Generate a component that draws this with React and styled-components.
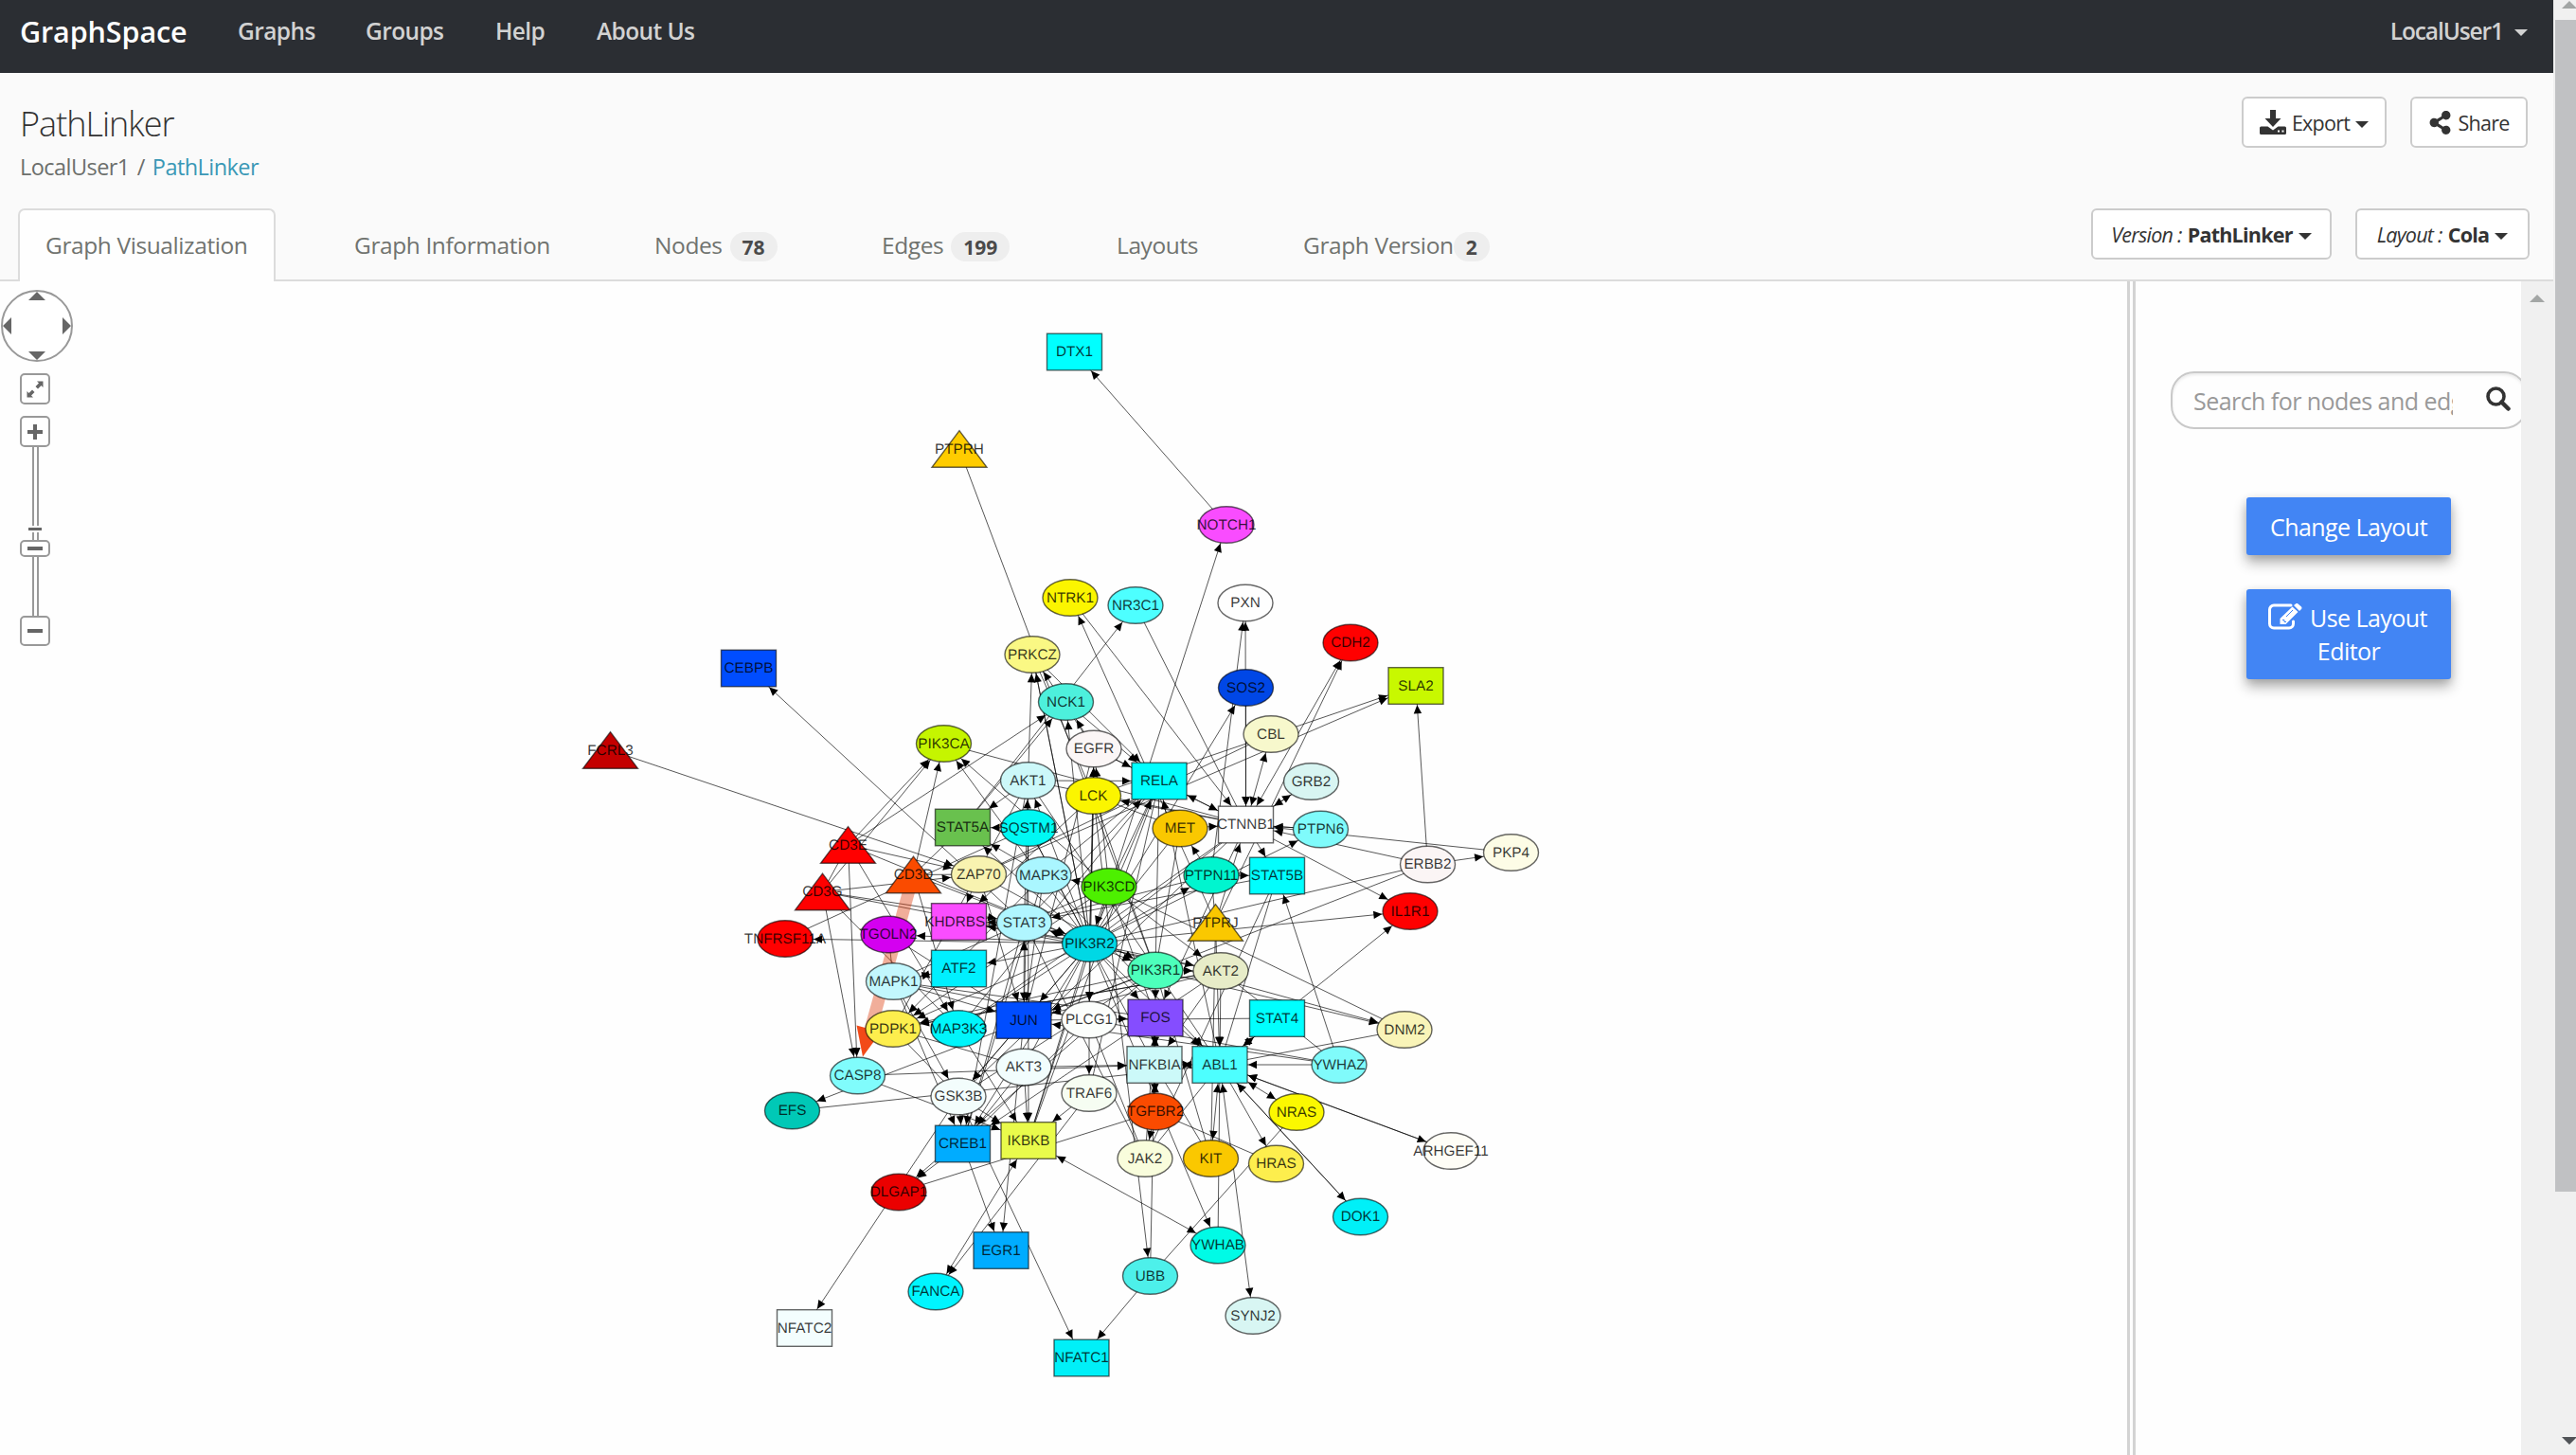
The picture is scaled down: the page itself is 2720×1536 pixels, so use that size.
import React from "react";
import styled, { createGlobalStyle } from "styled-components";
import { FaShareAlt } from "react-icons/fa";

const GlobalStyle = createGlobalStyle`
  html, body { margin: 0; padding: 0; overflow: hidden; }
  * { box-sizing: border-box; }
  body { background: #fefefe; font-family: "Open Sans", "Noto Sans", sans-serif; color: #333; }
`;

const Window = styled.div`
  display: flex;
  width: 2720px;
  height: 1536px;
  overflow: hidden;
`;
const Page = styled.div`
  display: flex;
  flex-direction: column;
  width: 2696px;
  flex: none;
`;
const NavBar = styled.nav`
  display: flex;
  height: 77px;
  flex: none;
  padding: 0 27px 12px 21px;
  align-items: center;
  background: #2b2e33;
  color: #d2d2d2;
  font-size: 24.5px;
  font-weight: 600;
  letter-spacing: -0.6px;
  white-space: nowrap;
`;
const Brand = styled.div`
  width: 230px;
  color: #fff;
  font-size: 30.5px;
  letter-spacing: -0.1px;
`;
const NavItem = styled.div`
  width: ${(p) => p.$w}px;
`;
const UserMenu = styled.div`
  display: flex;
  align-items: center;
  gap: 12px;
  margin-left: auto;
  letter-spacing: -1.1px;
`;
const Caret = styled.span`
  border: solid transparent;
  border-width: 7px 7px 0;
  border-top-color: currentColor;
  margin-top: 4px;
`;

const Header = styled.header`
  display: flex;
  justify-content: space-between;
  height: 143px;
  flex: none;
  padding: 25px 27px 0 21px;
  background: #fafafa;
`;
const Title = styled.h1`
  margin: 0;
  padding-top: 3px;
  font-size: 36px;
  line-height: 51px;
  font-weight: 300;
  letter-spacing: -1px;
`;
const Crumbs = styled.div`
  display: flex;
  gap: 8px;
  line-height: 40px;
  font-size: 23.5px;
  letter-spacing: -0.55px;
  color: #6c6f6c;
`;
const CrumbLink = styled.span`
  color: #3a98b6;
`;
const Actions = styled.div`
  display: flex;
  align-items: flex-start;
  gap: 25px;
`;
const Button = styled.button`
  display: flex;
  align-items: center;
  justify-content: center;
  gap: 6px;
  width: ${(p) => p.$w}px;
  height: 54px;
  padding: 0;
  border: 2px solid #ccc;
  border-radius: 6px;
  background: #fff;
  color: #333;
  font: 400 21.5px "Open Sans", "Noto Sans", sans-serif;
  letter-spacing: -0.75px;
  white-space: nowrap;
`;

const TabBar = styled.div`
  display: flex;
  height: 77px;
  flex: none;
  padding: 0 25px 0 19px;
  background: #fafafa;
  border-bottom: 2px solid #dcdcdc;
`;
const Tab = styled.div`
  display: flex;
  align-items: center;
  gap: ${(p) => p.$gap ?? 8}px;
  width: ${(p) => p.$w}px;
  height: 77px;
  padding: 0 0 2px ${(p) => (p.$active ? 27 : 29)}px;
  color: #70736f;
  font-size: 24.5px;
  letter-spacing: -0.4px;
  white-space: nowrap;
  border: 2px solid ${(p) => (p.$active ? "#dcdcdc" : "transparent")};
  border-bottom: 0;
  border-radius: 7px 7px 0 0;
  background: ${(p) => (p.$active ? "#fefefe" : "transparent")};
`;
const Badge = styled.span`
  display: grid;
  place-items: center;
  height: 31px;
  min-width: 37px;
  padding: 0 13px;
  margin-top: 4px;
  border-radius: 16px;
  background: #eee;
  color: #4a4a4a;
  font-size: 21px;
  font-weight: 700;
  letter-spacing: 0;
`;
const Selectors = styled.div`
  display: flex;
  gap: 25px;
  margin-left: auto;
`;

const Workspace = styled.main`
  display: flex;
  flex: 1;
  min-height: 0;
`;
const GraphPane = styled.section`
  position: relative;
  width: 2246px;
  flex: none;
  background: #fefefe;
`;
const Divider = styled.div`
  width: 9px;
  flex: none;
  border: solid #d3d3d3;
  border-width: 0 3px;
`;
const Sidebar = styled.aside`
  display: flex;
  flex-direction: column;
  width: 407px;
  flex: none;
  padding: 95px 0 0 37px;
  overflow: hidden;
`;
const SearchBox = styled.div`
  display: flex;
  justify-content: space-between;
  width: 377px;
  height: 61px;
  flex: none;
  padding: 0 16px 0 22px;
  border: 2px solid #c9c9c9;
  border-radius: 25px;
  box-shadow: inset 0 2px 3px rgba(0, 0, 0, 0.08);
  background: #fefefe;
`;
const SearchHint = styled.span`
  width: 274px;
  overflow: hidden;
  white-space: nowrap;
  color: #999;
  font-size: 25px;
  line-height: 59px;
  letter-spacing: -0.55px;
`;
const SearchIcon = styled.svg`
  width: 26px;
  height: 26px;
  margin-top: 14px;
`;
const BlueButton = styled.button`
  width: 216px;
  height: ${(p) => p.$h}px;
  margin: ${(p) => p.$top}px 0 0 80px;
  padding: 1px 0 0;
  border: 0;
  border-radius: 3px;
  background: #4285f4;
  color: #fff;
  font: 400 25px/35px "Open Sans", "Noto Sans", sans-serif;
  letter-spacing: -0.55px;
  box-shadow: 0 8px 14px rgba(0, 0, 0, 0.3), 0 2px 8px rgba(0, 0, 0, 0.12);
`;
const EditIcon = styled.svg`
  width: 36px;
  height: 28px;
  margin: 0 8px 0 -2px;
  vertical-align: -3px;
`;
const PaneScroll = styled.div`
  width: 34px;
  background: #f0f0f0;
  display: flex;
  justify-content: center;
  padding-top: 14px;
`;
const ArrowUp = styled.span`
  width: 0;
  height: 0;
  border: solid transparent;
  border-width: 0 8px 8px;
  border-bottom-color: #a3a6a5;
`;
const ArrowDown = styled(ArrowUp)`
  border-width: 8px 8px 0;
  border-top-color: #505357;
`;
const PageScroll = styled.div`
  display: flex;
  flex-direction: column;
  align-items: center;
  width: 34px;
  flex: none;
  padding: 1px 0 11px;
  background: #f0f0f0;
`;
const Thumb = styled.div`
  width: 30px;
  height: 1237px;
  margin: 12px 0 auto;
  background: #c0c1c3;
`;

const Controls = styled.div`
  position: absolute;
  left: 1px;
  top: 9px;
  width: 76px;
  display: flex;
  flex-direction: column;
  align-items: center;
`;
const PanDial = styled.svg`
  width: 76px;
  height: 76px;
`;
const ControlButton = styled.div`
  display: grid;
  place-items: center;
  width: 32px;
  height: ${(p) => p.$h ?? 33}px;
  margin: ${(p) => p.$top ?? 0}px 4px 0 0;
  border: 2px solid #999;
  border-radius: 5px;
  background: #fff;
`;
const Rail = styled.div`
  width: 7px;
  height: ${(p) => p.$h}px;
  margin-right: 4px;
  border: solid #999;
  border-width: 0 2px;
`;
const Tick = styled.div`
  width: 14px;
  height: 3px;
  margin: 2px 5px 2px 0;
  background: #666;
`;
const Bar = styled.div`
  width: 16px;
  height: 4px;
  background: #666;
`;
const Network = styled.svg`
  display: block;
  width: 2246px;
  height: 1239px;
`;
const NodeLabel = styled.text`
  font: 15.3px "Liberation Sans", Arial, sans-serif;
  text-anchor: middle;
  text-rendering: geometricPrecision;
  fill: #000;
  fill-opacity: 0.78;
`;

// name: [x, y, colour, shape]; e = ellipse, r = rectangle, t = triangle
const NODES = {
  DTX1: [1134.5, 371.5, "#00ffff", "r"],
  PTPRH: [1013, 474, "#fc0", "t"],
  NOTCH1: [1295, 554, "#f94cff", "e"],
  NTRK1: [1130, 631, "#fbf500", "e"],
  NR3C1: [1199, 639, "#4dffff", "e"],
  PXN: [1315, 636.5, "#fefefe", "e"],
  CDH2: [1426, 678.5, "#f00", "e"],
  PRKCZ: [1090, 691, "#faf884", "e"],
  SLA2: [1495, 724, "#c8f800", "r"],
  SOS2: [1315.5, 726, "#0047e6", "e"],
  CEBPB: [790.5, 705.5, "#004dff", "r"],
  NCK1: [1125.5, 741, "#4df0dc", "e"],
  CBL: [1342, 775, "#f7f8cc", "e"],
  PIK3CA: [996.5, 785, "#c5f500", "e"],
  EGFR: [1155, 790.5, "#fbf6f6", "e"],
  FCRL3: [644.5, 792, "#c40000", "t"],
  AKT1: [1085.5, 824, "#ccf8f9", "e"],
  RELA: [1224, 824.5, "#00ffff", "r"],
  GRB2: [1384.5, 825, "#d8f5f2", "e"],
  LCK: [1154.5, 840, "#fbf500", "e"],
  STAT5A: [1016.5, 873.5, "#69c14e", "r"],
  SQSTM1: [1086, 874, "#00f8f4", "e"],
  MET: [1246, 874.5, "#fac800", "e"],
  CTNNB1: [1315.5, 870.5, "#fefefe", "r"],
  PTPN6: [1394.5, 875.5, "#7ffbfb", "e"],
  CD3E: [895.5, 892, "#f00", "t"],
  PKP4: [1595.5, 900, "#fdfce6", "e"],
  ERBB2: [1507.5, 912.5, "#fbf5f5", "e"],
  CD3D: [964.5, 923.5, "#fa4b00", "t"],
  ZAP70: [1033.5, 923, "#f8f3b0", "e"],
  MAPK3: [1102, 924, "#aaf6ff", "e"],
  PIK3CD: [1171, 936, "#4df000", "e"],
  PTPN11: [1279, 924, "#00f5cf", "e"],
  STAT5B: [1348.5, 924.5, "#00ffff", "r"],
  CD3G: [868.5, 941.5, "#f00", "t"],
  IL1R1: [1489, 962, "#f00", "e"],
  STAT3: [1081.5, 974, "#b0f6ff", "e"],
  KHDRBS1: [1012.5, 973, "#fa4dff", "r"],
  PTPRJ: [1283.5, 974, "#fac800", "t"],
  TGOLN2: [938, 986.5, "#d400f0", "e"],
  TNFRSF11A: [829, 991, "#f00", "e"],
  PIK3R2: [1150.5, 996, "#00d8e5", "e"],
  ATF2: [1012.5, 1022.5, "#00f0ff", "r"],
  PIK3R1: [1220, 1024.5, "#4dffbb", "e"],
  AKT2: [1289, 1025, "#e7ecc8", "e"],
  MAPK1: [943.5, 1036, "#c2f7fd", "e"],
  PDPK1: [943, 1086, "#fdee4d", "e"],
  MAP3K3: [1012, 1086, "#00f5fb", "e"],
  JUN: [1081, 1077, "#004dff", "r"],
  PLCG1: [1150, 1076.5, "#fcfefc", "e"],
  FOS: [1220, 1074.5, "#854dff", "r"],
  STAT4: [1348.5, 1075, "#00ffff", "r"],
  DNM2: [1483, 1087, "#f9f4b8", "e"],
  AKT3: [1081, 1126.5, "#f2fdfd", "e"],
  NFKBIA: [1219, 1124, "#ccf9f9", "r"],
  ABL1: [1288, 1124, "#4dffff", "r"],
  YWHAZ: [1414, 1124, "#80fbfb", "e"],
  CASP8: [905.5, 1135.5, "#80fcfc", "e"],
  TRAF6: [1150, 1154, "#f6fdf2", "e"],
  GSK3B: [1012, 1157.5, "#f3fdfc", "e"],
  EFS: [836.5, 1172.5, "#00c8b6", "e"],
  TGFBR2: [1220, 1173.5, "#fa4b00", "e"],
  NRAS: [1369, 1174, "#fbf800", "e"],
  IKBKB: [1086, 1204, "#e9fb4b", "r"],
  CREB1: [1016.5, 1207.5, "#00acff", "r"],
  JAK2: [1209, 1223, "#f9fddc", "e"],
  KIT: [1278.5, 1223, "#fac800", "e"],
  HRAS: [1347.5, 1228.5, "#fdee4d", "e"],
  ARHGEF11: [1532, 1215, "#fefdf6", "e"],
  DLGAP1: [949, 1258.5, "#eb0000", "e"],
  DOK1: [1436.5, 1284.5, "#00f0f8", "e"],
  YWHAB: [1286, 1314.5, "#00fbe6", "e"],
  EGR1: [1057, 1320, "#00acff", "r"],
  UBB: [1214.5, 1347, "#4df0ea", "e"],
  FANCA: [988, 1363.5, "#00f5ff", "e"],
  SYNJ2: [1323, 1389, "#d8f6f3", "e"],
  NFATC2: [849.5, 1402, "#f3fefe", "r"],
  NFATC1: [1142, 1433.5, "#00f0f8", "r"],
};

// source > targets; a leading "=" marks an edge with arrows at both ends, "-" one without
const EDGES = `
NOTCH1 > DTX1
PTPRH > -PIK3R1
IKBKB > NOTCH1
PTPRJ > NTRK1 CDH2 -PTPN11 ABL1 -KIT CTNNB1
NTRK1 > CTNNB1
NR3C1 > -CTNNB1
STAT5A > NR3C1 NCK1
STAT3 > CEBPB =JUN KHDRBS1 AKT1 RELA -PIK3CD -CREB1
FCRL3 > ZAP70
CD3E > PIK3CA NCK1 ZAP70 CASP8 MAP3K3 PIK3R2 -CD3G
CD3G > PIK3CA ZAP70 CASP8 STAT3 -PIK3R2 -MAP3K3
CD3D > PIK3CA MAP3K3 -PIK3R2 -ZAP70 -STAT5A
PIK3CA > -CTNNB1
PIK3R2 > PIK3CA SOS2 IL1R1 -ERBB2 PTPN6 TNFRSF11A DNM2 YWHAB TGOLN2 PIK3R1 AKT2 PLCG1 FOS -NFKBIA ABL1 =STAT3 JUN -AKT3 -IKBKB CREB1 GSK3B -MAP3K3 PDPK1 KHDRBS1 ATF2 PTPN11 RELA EGFR -LCK AKT1 -SQSTM1 NCK1 PRKCZ -CTNNB1 STAT5A
PIK3CD > PIK3CA PIK3R2 PDPK1 EGFR AKT2 MAPK3 -RELA -FOS
ZAP70 > SLA2 -CBL KHDRBS1 PIK3R1 JUN
LCK > SLA2 UBB EGFR PLCG1 KHDRBS1 -PIK3R1
ERBB2 > SLA2 CTNNB1 PKP4 -PIK3R1
CTNNB1 > =CDH2 =PXN =CBL GRB2 IL1R1 STAT5B -PTPN6 =RELA FOS LCK
PTPN11 > PXN STAT5B MET -STAT3
SOS2 > CTNNB1
GRB2 > CTNNB1
PTPN6 > CTNNB1
PKP4 > CTNNB1
TNFRSF11A > -SQSTM1
IL1R1 > =ABL1
PIK3R1 > DNM2 EFS DLGAP1 AKT2 FOS -RELA -MET PDPK1 JUN -GSK3B
AKT2 > PDPK1 NFKBIA CREB1 ABL1 JUN -KHDRBS1
AKT1 > STAT5A IKBKB -CTNNB1 RELA CREB1 PRKCZ -ABL1
AKT3 > NFKBIA IKBKB CREB1 -PDPK1
YWHAZ > STAT5B ABL1 JUN -AKT2
ABL1 > =ARHGEF11 =NRAS HRAS =DOK1 =KIT =SYNJ2 -YWHAB =STAT4 RELA -JAK2 -STAT5B
DOK1 > ABL1
ARHGEF11 > ABL1
HRAS > -TGFBR2
DNM2 > -ABL1 -PIK3CD
TGFBR2 > =NFKBIA JAK2 -DLGAP1
JAK2 > -STAT3 -FOS -PLCG1 -STAT5B
KIT > -PIK3R1 -NFKBIA
NFKBIA > -UBB =FOS =ABL1
IKBKB > =YWHAB =FANCA -RELA
TRAF6 > FANCA IKBKB -RELA
UBB > NFATC1 -NRAS
GSK3B > NFATC2 NFATC1 CREB1 IKBKB -CTNNB1
CREB1 > EGR1 DLGAP1
JUN > EGR1 -STAT4 GSK3B
EFS > -ABL1
CASP8 > NFKBIA IKBKB
MAPK1 > =ATF2 GSK3B JUN -FOS CREB1 -STAT3 -PLCG1
MAPK3 > PDPK1 JUN STAT5A -RELA -CREB1 ABL1
PDPK1 > -GSK3B -AKT2 -AKT1
MAP3K3 > IKBKB -CTNNB1
TGOLN2 > -MAPK1 -JUN
STAT5B > STAT3
PLCG1 > TRAF6 FOS -CREB1 -YWHAZ
EGFR > NCK1 PRKCZ RELA -CTNNB1 -JUN
PRKCZ > RELA -LCK -PIK3R2
NCK1 > RELA
MET > -PIK3R2 CTNNB1 -LCK
SQSTM1 > -JUN STAT5A -PIK3R2
RELA > -MAP3K3
FOS > NFKBIA
`
  .trim()
  .split("\n")
  .flatMap((line) => {
    const [from, list] = line.split(" > ");
    return list
      .trim()
      .split(" ")
      .map((t) => ({ from, to: t.replace(/^[=-]/, ""), kind: t[0] }));
  });

const HALF_W = 29;
const HALF_H = 19.3;

// Distance from a node's centre to its outline along the unit vector (ux, uy)
const reach = (shape, ux, uy) =>
  shape === "e"
    ? 1 / Math.hypot(ux / HALF_W, uy / HALF_H)
    : Math.min(HALF_W / Math.abs(ux || 1e-6), HALF_H / Math.abs(uy || 1e-6));

function arrowAt(node, ux, uy, len = 9, half = 4.2) {
  const d = reach(node[3], ux, uy) + 1;
  const x = node[0] + ux * d;
  const y = node[1] + uy * d;
  const bx = x + ux * len;
  const by = y + uy * len;
  return `M${x} ${y}L${bx - uy * half} ${by + ux * half}L${bx + uy * half} ${by - ux * half}Z`;
}

function Edge({ from, to, kind }) {
  const a = NODES[from];
  const b = NODES[to];
  const dist = Math.hypot(a[0] - b[0], a[1] - b[1]);
  const ux = (a[0] - b[0]) / dist;
  const uy = (a[1] - b[1]) / dist;
  return (
    <g>
      <line x1={a[0]} y1={a[1]} x2={b[0]} y2={b[1]} stroke="#000" strokeOpacity="0.66" strokeWidth="1" />
      {kind !== "-" && <path d={arrowAt(b, ux, uy)} />}
      {kind === "=" && <path d={arrowAt(a, -ux, -uy)} />}
    </g>
  );
}

function Node({ name }) {
  const [x, y, fill, shape] = NODES[name];
  const paint = { fill, stroke: "#000", strokeOpacity: 0.6, strokeWidth: 1.4 };
  return (
    <g>
      {shape === "e" && <ellipse cx={x} cy={y} rx={HALF_W} ry={HALF_H} {...paint} />}
      {shape === "r" && <rect x={x - HALF_W} y={y - HALF_H} width={HALF_W * 2} height={HALF_H * 2} {...paint} />}
      {shape === "t" && (
        <path d={`M${x} ${y - HALF_H}L${x + HALF_W} ${y + HALF_H}H${x - HALF_W}Z`} {...paint} />
      )}
      <NodeLabel x={x} y={y + 4.8}>{name}</NodeLabel>
    </g>
  );
}

function NetworkGraph() {
  return (
    <Network viewBox="0 297 2246 1239">
      {EDGES.map((e, i) => (
        <Edge key={i} {...e} />
      ))}
      <path d="M964.5 923.5L918 1091" stroke="#e04010" strokeOpacity="0.42" strokeWidth="13" />
      <path d="M911 1115.5L904.5 1082.5L930 1089.5Z" fill="#f24a18" />
      {Object.keys(NODES).map((n) => (
        <Node key={n} name={n} />
      ))}
    </Network>
  );
}

function PanZoom() {
  return (
    <Controls>
      <PanDial viewBox="0 0 76 76">
        <circle cx="38" cy="38" r="37" fill="#fff" stroke="#999" strokeWidth="2" />
        <path d="M38 2l9 9H29zM38 74l9-9H29zM2 38l9-9v18zM74 38l-9-9v18z" fill="#666" />
      </PanDial>
      <ControlButton $top={12}>
        <svg width="18" height="18" viewBox="0 0 18 18">
          <path d="M11 0.5h6.5V7l-2-2-3.5 3.5-2.5-2.5L13 2.5zM7 17.500H0.500V11l2 2L6 9.500 8.500 12 5 15.500z" fill="#666" />
        </svg>
      </ControlButton>
      <ControlButton $top={12}>
        <svg width="16" height="16" viewBox="0 0 16 16">
          <path d="M6 0h4v6h6v4h-6v6H6v-6H0V6h6z" fill="#666" />
        </svg>
      </ControlButton>
      <Rail $h={83} />
      <Tick />
      <Rail $h={8} />
      <ControlButton $h={18}>
        <Bar />
      </ControlButton>
      <Rail $h={62} />
      <ControlButton $h={32}>
        <Bar />
      </ControlButton>
    </Controls>
  );
}

const DownloadIcon = () => (
  <svg width="28" height="26" viewBox="0 0 28 26" fill="#333">
    <path d="M11 0h6v9h5.500L14 18 5.500 9H11z" />
    <path
      fillRule="evenodd"
      d="M1.500 17.500h7l5.500 4 5.500-4h7A1.500 1.500 0 0 1 28 19v5.500a1.500 1.500 0 0 1-1.500 1.500h-25A1.500 1.500 0 0 1 0 24.500V19a1.500 1.500 0 0 1 1.500-1.500zM19 21.500v2h2v-2zM23.500 21.500v2h2v-2z"
    />
  </svg>
);

export default function App() {
  return (
    <Window>
      <GlobalStyle />
      <Page>
        <NavBar>
          <Brand>GraphSpace</Brand>
          <NavItem $w={135}>Graphs</NavItem>
          <NavItem $w={137}>Groups</NavItem>
          <NavItem $w={107}>Help</NavItem>
          <NavItem $w={120}>About Us</NavItem>
          <UserMenu>
            LocalUser1 <Caret />
          </UserMenu>
        </NavBar>
        <Header>
          <div>
            <Title>PathLinker</Title>
            <Crumbs>
              <span>LocalUser1</span>
              <span>/</span>
              <CrumbLink>PathLinker</CrumbLink>
            </Crumbs>
          </div>
          <Actions>
            <Button $w={153}>
              <DownloadIcon />
              Export
              <Caret />
            </Button>
            <Button $w={124}>
              <FaShareAlt size={25} />
              Share
            </Button>
          </Actions>
        </Header>
        <TabBar>
          <Tab $active $w={272}>Graph Visualization</Tab>
          <Tab $w={52} />
          <Tab $w={317}>Graph Information</Tab>
          <Tab $w={240}>
            Nodes <Badge>78</Badge>
          </Tab>
          <Tab $w={248}>
            Edges <Badge>199</Badge>
          </Tab>
          <Tab $w={197}>Layouts</Tab>
          <Tab $w={260} $gap={-1}>
            Graph Version <Badge>2</Badge>
          </Tab>
          <Selectors>
            <Button $w={254}>
              <i>Version :</i>
              <b>PathLinker</b>
              <Caret />
            </Button>
            <Button $w={184}>
              <i>Layout :</i>
              <b>Cola</b>
              <Caret />
            </Button>
          </Selectors>
        </TabBar>
        <Workspace>
          <GraphPane>
            <NetworkGraph />
            <PanZoom />
          </GraphPane>
          <Divider />
          <Sidebar>
            <SearchBox>
              <SearchHint>Search for nodes and edges</SearchHint>
              <SearchIcon viewBox="0 0 26 26" fill="none" stroke="#333">
                <circle cx="10.500" cy="10.500" r="8.500" strokeWidth="3.600" />
                <path d="M16.500 16.500l7 7" strokeWidth="4.500" strokeLinecap="round" />
              </SearchIcon>
            </SearchBox>
            <BlueButton $h={61} $top={72}>Change Layout</BlueButton>
            <BlueButton $h={95} $top={36}>
              <EditIcon viewBox="0 0 36 28">
                <path
                  d="M24 2H6a4.500 4.500 0 0 0-4.500 4.500v15A4.500 4.500 0 0 0 6 26h16a4.500 4.500 0 0 0 4.500-4.500V19"
                  fill="none"
                  stroke="#fff"
                  strokeWidth="3"
                  strokeLinecap="round"
                />
                <path d="M12.500 22v-6L25.500 3.500l6 5.500L18.500 22zM27 2l2-1.600a2 2 0 0 1 2.500 0l3.500 3.200a2 2 0 0 1 0 2.500L33 8z" fill="#fff" />
                <path d="M15 17.500h2v2h2M19 14l7-7" fill="none" stroke="#4285f4" strokeWidth="1" />
              </EditIcon>
              Use Layout
              <br />
              Editor
            </BlueButton>
          </Sidebar>
          <PaneScroll>
            <ArrowUp />
          </PaneScroll>
        </Workspace>
      </Page>
      <PageScroll>
        <ArrowUp />
        <Thumb />
        <ArrowDown />
      </PageScroll>
    </Window>
  );
}
